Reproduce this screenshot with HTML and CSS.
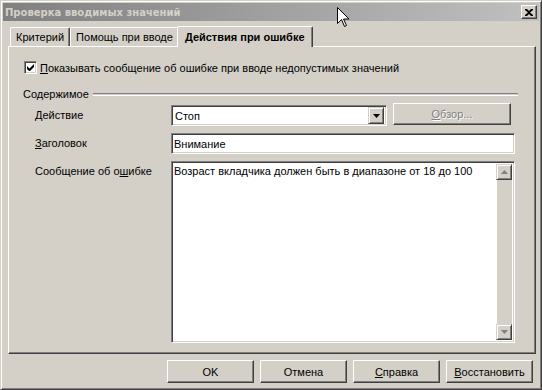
FILE: index.html
```html
<!DOCTYPE html>
<html lang="ru">

<head>
    <meta charset="UTF-8">
    <title>Проверка вводимых значений</title>
    <link rel="stylesheet" href="styles.css">
</head>

<body>
    <div class="window">
        <div class="titlebar">
            <span class="title">Проверка вводимых значений</span>
            <span class="close-btn">
                <svg width="8" height="7" viewBox="0 0 8 7">
                    <path d="M0 0h2l2 2 2-2h2v1L5 3.5 8 6v1H6L4 5 2 7H0V6l3-2.5L0 1z" fill="#000"/>
                </svg>
            </span>
        </div>

        <div class="tabs">
            <span class="tab">Критерий</span>
            <span class="tab">Помощь при вводе</span>
            <span class="tab active">Действия при ошибке</span>
        </div>

        <div class="panel">
            <label class="check-row">
                <span class="checkbox">
                    <svg width="7" height="7" viewBox="0 0 7 7">
                        <path d="M0 2v3l2 2h1l4-4V0L2.5 4.5z" fill="#000"/>
                    </svg>
                </span>
                <span><u>П</u>оказывать сообщение об ошибке при вводе недопустимых значений</span>
            </label>

            <div class="group-title">
                <span>Содержимое</span>
                <span class="etched"></span>
            </div>

            <div class="form">
                <span class="label"><u>Д</u>ействие</span>
                <div class="field-row">
                    <div class="combo">
                        <span class="combo-text">Стоп</span>
                        <span class="combo-btn">
                            <svg width="7" height="4" viewBox="0 0 7 4"><path d="M0 0h7L3.5 4z" fill="#000"/></svg>
                        </span>
                    </div>
                    <span class="button disabled"><u>О</u>бзор...</span>
                </div>

                <span class="label"><u>З</u>аголовок</span>
                <div class="input">Внимание</div>

                <span class="label">Сообщение об о<u>ш</u>ибке</span>
                <div class="textarea">
                    <div class="textarea-text">Возраст вкладчика должен быть в диапазоне от 18 до 100</div>
                    <div class="scrollbar">
                        <span class="scroll-btn">
                            <svg width="7" height="4" viewBox="0 0 7 4"><path d="M3.5 0L7 4H0z" fill="#808080"/></svg>
                        </span>
                        <span class="scroll-track"></span>
                        <span class="scroll-btn">
                            <svg width="7" height="4" viewBox="0 0 7 4"><path d="M0 0h7L3.5 4z" fill="#808080"/></svg>
                        </span>
                    </div>
                </div>
            </div>
        </div>

        <div class="buttons">
            <span class="button">OK</span>
            <span class="button">Отмена</span>
            <span class="button"><u>С</u>правка</span>
            <span class="button"><u>В</u>осстановить</span>
        </div>

        <!-- mouse pointer caught in the screenshot -->
        <svg class="cursor" width="12" height="20" viewBox="0 0 12 20">
            <path d="M0.5 0.5v16l4-4 3 7 2-1-3-6.5h5.5z" fill="#fff" stroke="#000" stroke-linejoin="miter"/>
        </svg>
    </div>
</body>
</html>
```

FILE: styles.css
```css
body {
    margin: 0;
    background: #d4d0c8;
    font-family: 'Liberation Sans', Arial, sans-serif;
    font-size: 11px;
    color: #000;
}

u {
    text-decoration: underline;
    text-underline-offset: 1px;
}

.window {
    position: relative;
    width: 542px;
    height: 390px;
    box-sizing: border-box;
    background: #d4d0c8;
    border: 1px solid;
    border-color: #d4d0c8 #404040 #404040 #d4d0c8;
    box-shadow: inset 1px 1px 0 #fff, inset -1px -1px 0 #808080;
    padding: 2px;
}

.cursor {
    position: absolute;
    left: 336px;
    top: 6px;
}

.titlebar {
    height: 18px;
    display: flex;
    align-items: center;
    justify-content: space-between;
    padding: 0 2px 0 2px;
    background: linear-gradient(90deg, #808080, #c0c0c0);
}

.title {
    color: #d4d0c8;
    font-family: 'DejaVu Sans', sans-serif;
    font-weight: bold;
    font-size: 10px;
}

.close-btn {
    width: 16px;
    height: 14px;
    box-sizing: border-box;
    display: flex;
    align-items: center;
    justify-content: center;
    background: #d4d0c8;
    border: 1px solid;
    border-color: #fff #404040 #404040 #fff;
    box-shadow: inset -1px -1px 0 #808080;
}

.tabs {
    display: flex;
    align-items: flex-end;
    height: 25px;
    margin: 0 0 0 5px;
    padding-left: 2px;
}

.tab {
    height: 18px;
    padding: 0 5px;
    line-height: 18px;
    border: 1px solid;
    border-bottom: none;
    border-color: #fff #404040 transparent #fff;
    box-shadow: inset -1px 0 0 #808080;
    border-radius: 2px 2px 0 0;
}

.tab.active {
    height: 20px;
    line-height: 20px;
    font-weight: bold;
    padding: 0 7px;
    margin-left: -2px;
    position: relative;
    top: 1px;
    background: #d4d0c8;
}

.panel {
    height: 308px;
    margin: 0 3px 0 5px;
    box-sizing: border-box;
    border: 1px solid;
    border-color: #fff #404040 #404040 #fff;
    box-shadow: inset -1px -1px 0 #808080;
    padding: 14px 17px 8px 14px;
}

.check-row {
    display: flex;
    align-items: center;
    gap: 3px;
    margin-left: 1px;
}

.checkbox {
    width: 13px;
    height: 13px;
    box-sizing: border-box;
    display: flex;
    align-items: center;
    justify-content: center;
    background: #fff;
    border: 1px solid;
    border-color: #808080 #fff #fff #808080;
    box-shadow: inset 1px 1px 0 #404040, inset -1px -1px 0 #d4d0c8;
}

.group-title {
    display: flex;
    align-items: center;
    gap: 4px;
    margin-top: 14px;
}

.etched {
    flex: 1;
    height: 1px;
    border-top: 1px solid #808080;
    border-bottom: 1px solid #fff;
}

.form {
    display: grid;
    grid-template-columns: 136px 1fr;
    row-gap: 7px;
    margin: 5px 3px 0 12px;
}

.label {
    line-height: 21px;
}

.field-row {
    display: flex;
    gap: 6px;
}

.combo,
.input,
.textarea {
    box-sizing: border-box;
    background: #fff;
    border: 1px solid;
    border-color: #808080 #fff #fff #808080;
    box-shadow: inset 1px 1px 0 #404040, inset -1px -1px 0 #d4d0c8;
}

.combo {
    width: 216px;
    height: 21px;
    display: flex;
    align-items: center;
    justify-content: space-between;
    padding: 2px;
}

.combo-text {
    padding-left: 1px;
}

.combo-btn,
.scroll-btn {
    width: 16px;
    height: 17px;
    box-sizing: border-box;
    display: flex;
    align-items: center;
    justify-content: center;
    background: #d4d0c8;
    border: 1px solid;
    border-color: #d4d0c8 #404040 #404040 #d4d0c8;
    box-shadow: inset 1px 1px 0 #fff, inset -1px -1px 0 #808080;
}

.input {
    height: 21px;
    line-height: 17px;
    padding: 2px 2px;
}

.textarea {
    height: 182px;
    display: flex;
    padding: 2px;
}

.textarea-text {
    flex: 1;
    padding: 1px 0;
}

.scrollbar {
    width: 16px;
    display: flex;
    flex-direction: column;
}

.scroll-btn {
    height: 16px;
}

.scroll-track {
    flex: 1;
    background: #d4d0c8;
    border-left: 1px solid #fff;
}

.button {
    width: 87px;
    height: 23px;
    box-sizing: border-box;
    display: flex;
    align-items: center;
    justify-content: center;
    background: #d4d0c8;
    border: 1px solid;
    border-color: #fff #404040 #404040 #fff;
    box-shadow: inset -1px -1px 0 #808080;
}

.button.disabled {
    width: 118px;
    height: 22px;
    margin-top: -2px;
    color: #808080;
    text-shadow: 1px 1px 0 #fff;
}

.buttons {
    display: flex;
    justify-content: flex-end;
    gap: 6px;
    margin: 6px 6px 0 0;
}
```
